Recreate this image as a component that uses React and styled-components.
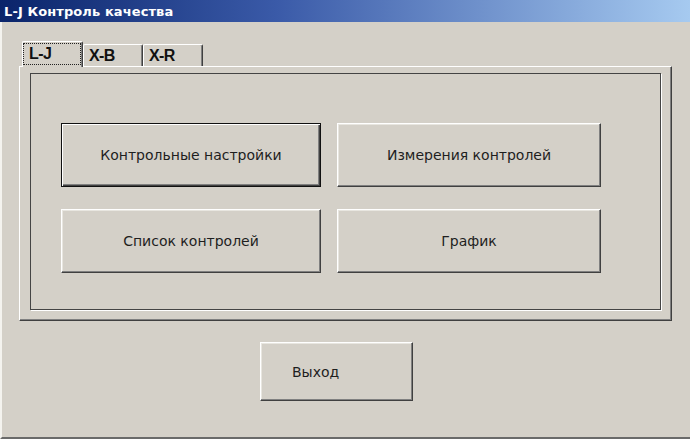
import React from "react";
import styled, { createGlobalStyle, css } from "styled-components";

const GlobalStyle = createGlobalStyle`
  html, body {
    margin: 0;
    padding: 0;
    background: #d4d0c8;
  }
  * {
    box-sizing: border-box;
  }
`;

const Window = styled.div`
  width: 690px;
  height: 439px;
  display: flex;
  flex-direction: column;
  background: #d4d0c8;
  font-family: "DejaVu Sans", Verdana, sans-serif;
  color: #111;
  overflow: hidden;
`;

const TitleBar = styled.div`
  height: 22px;
  flex: none;
  display: flex;
  align-items: center;
  padding-left: 4px;
  background: linear-gradient(to right, #0a246a 0%, #3a5aa8 40%, #a6caf0 100%);
`;

const Title = styled.span`
  color: #fff;
  font-family: "DejaVu Sans", Verdana, sans-serif;
  font-weight: bold;
  font-size: 13px;
  letter-spacing: 0.1px;
`;

const Body = styled.div`
  flex: 1;
  display: flex;
  flex-direction: column;
  padding: 19px 0 0 17px;
  border-left: 2px solid #f4f3ef;
  border-bottom: 2px solid #6a6a6a;
`;

const TabStrip = styled.div`
  display: flex;
  align-items: flex-end;
  height: 25px;
  padding-left: 3px;
  position: relative;
  z-index: 1;
`;

const Tab = styled.div`
  width: ${(p) => p.$width}px;
  height: ${(p) => (p.$active ? 26 : 22)}px;
  margin-bottom: ${(p) => (p.$active ? -1 : 0)}px;
  padding: ${(p) => (p.$active ? "1px 1px 2px 0" : "0 0 0 5px")};
  display: flex;
  align-items: center;
  background: #d4d0c8;
  border-top: 1px solid #ffffff;
  border-left: 1px solid #ffffff;
  border-right: 1px solid #404040;
  border-top-left-radius: 2px;
  border-top-right-radius: 2px;
  box-shadow: inset -1px 0 0 #808080;
  font-family: "Liberation Sans", Arial, sans-serif;
  font-weight: bold;
  font-size: 16px;
  letter-spacing: -0.6px;
`;

const FocusRect = styled.div`
  flex: 1;
  height: 100%;
  display: flex;
  align-items: center;
  padding-left: 5px;
  border: 1px dotted #222;
`;

const Panel = styled.div`
  width: 653px;
  height: 255px;
  padding: 6px 10px 0 10px;
  border-top: 1px solid #ffffff;
  border-left: 1px solid #ffffff;
  border-right: 1px solid #404040;
  border-bottom: 1px solid #404040;
  box-shadow: inset -1px -1px 0 #808080;
`;

const Group = styled.div`
  width: 631px;
  height: 237px;
  padding: 49px 0 0 30px;
  border: 1px solid #444;
  box-shadow: 1px 1px 0 #ffffff;
`;

const ButtonGrid = styled.div`
  display: grid;
  grid-template-columns: 260px 264px;
  grid-auto-rows: 64px;
  column-gap: 16px;
  row-gap: 22px;
`;

const Button = styled.button`
  width: ${(p) => (p.$width ? `${p.$width}px` : "100%")};
  height: ${(p) => (p.$height ? `${p.$height}px` : "100%")};
  display: flex;
  align-items: center;
  justify-content: ${(p) => (p.$left ? "flex-start" : "center")};
  padding: ${(p) => (p.$left ? "0 0 0 31px" : "0")};
  background: #d4d0c8;
  color: #1e1e1e;
  font-family: "DejaVu Sans", Verdana, sans-serif;
  font-size: 14px;
  border-top: 1px solid #ffffff;
  border-left: 1px solid #ffffff;
  border-right: 1px solid #404040;
  border-bottom: 1px solid #404040;
  box-shadow: inset -1px -1px 0 #808080, inset 1px 1px 0 #e8e6e0;
  cursor: pointer;

  ${(p) =>
    p.$default &&
    css`
      border: 1px solid #111;
      box-shadow: inset 1px 1px 0 #ffffff, inset -1px -1px 0 #404040,
        inset -2px -2px 0 #808080;
    `}
`;

const Footer = styled.div`
  padding: 21px 0 0 241px;
`;

const tabs = [
  { label: "L-J", width: 61, active: true },
  { label: "X-B", width: 60 },
  { label: "X-R", width: 60 },
];

const App = () => {
  return (
    <>
      <GlobalStyle />
      <Window>
        <TitleBar>
          <Title>L-J Контроль качества</Title>
        </TitleBar>
        <Body>
          <TabStrip>
            {tabs.map((t) => (
              <Tab key={t.label} $width={t.width} $active={t.active}>
                {t.active ? <FocusRect>{t.label}</FocusRect> : t.label}
              </Tab>
            ))}
          </TabStrip>
          <Panel>
            <Group>
              <ButtonGrid>
                <Button $default>Контрольные настройки</Button>
                <Button>Измерения контролей</Button>
                <Button>Список контролей</Button>
                <Button>График</Button>
              </ButtonGrid>
            </Group>
          </Panel>
          <Footer>
            <Button $width={153} $height={59} $left>
              Выход
            </Button>
          </Footer>
        </Body>
      </Window>
    </>
  );
};

export default App;
